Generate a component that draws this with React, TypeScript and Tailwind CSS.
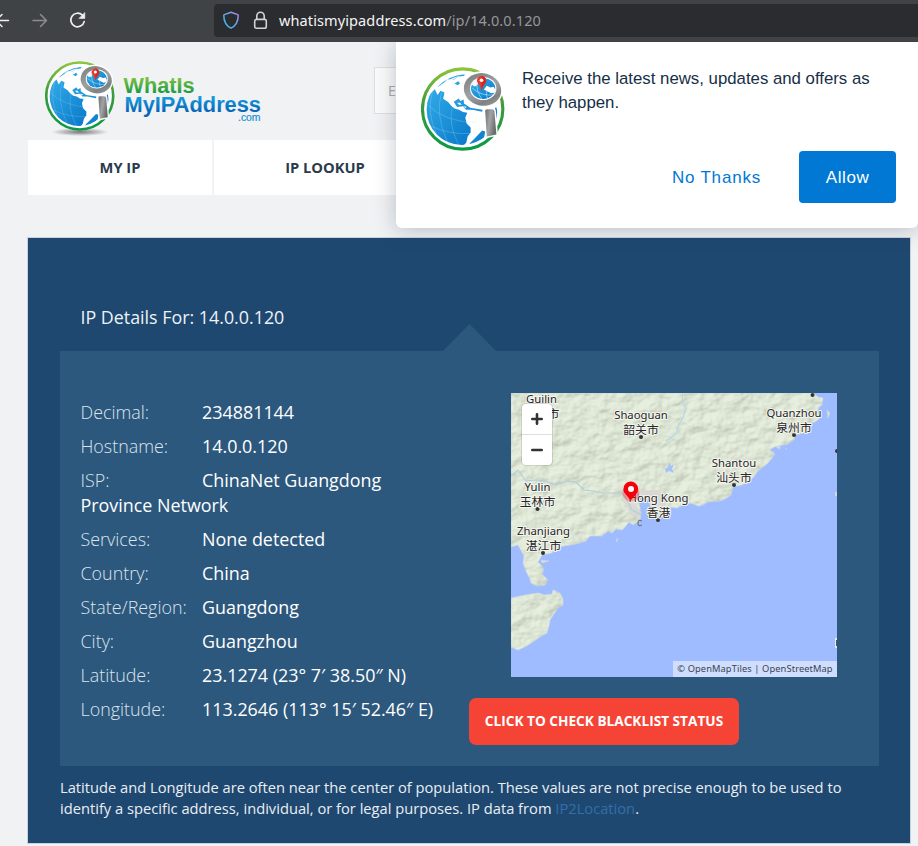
import React from "react";

const details: [string, string][] = [
  ["Decimal:", "234881144"],
  ["Hostname:", "14.0.0.120"],
  ["ISP:", "ChinaNet Guangdong Province Network"],
  ["Services:", "None detected"],
  ["Country:", "China"],
  ["State/Region:", "Guangdong"],
  ["City:", "Guangzhou"],
  ["Latitude:", "23.1274 (23° 7′ 38.50″ N)"],
  ["Longitude:", "113.2646 (113° 15′ 52.46″ E)"],
];

function Globe({ id, className }: { id: string; className: string }) {
  const ring = `${id}-ring`;
  const sea = `${id}-sea`;
  const metal = `${id}-metal`;
  const handle = `${id}-handle`;
  const clip = `${id}-clip`;
  const lens = `${id}-lens`;
  return (
    <svg viewBox="63 78 254 254" className={className}>
      <defs>
        <linearGradient id={ring} x1="0" y1="0" x2="0" y2="1">
          <stop offset="0" stopColor="#8cc43c" />
          <stop offset="0.45" stopColor="#3f9a3c" />
          <stop offset="1" stopColor="#0b9a48" />
        </linearGradient>
        <linearGradient id={sea} x1="0" y1="0" x2="1" y2="1">
          <stop offset="0" stopColor="#35b0ea" />
          <stop offset="1" stopColor="#0877c9" />
        </linearGradient>
        <linearGradient id={metal} x1="0" y1="0" x2="1" y2="1">
          <stop offset="0" stopColor="#77787a" />
          <stop offset="0.5" stopColor="#a0a1a3" />
          <stop offset="0.75" stopColor="#808183" />
          <stop offset="1" stopColor="#a6a7a9" />
        </linearGradient>
        <linearGradient id={handle} x1="0" y1="0" x2="1" y2="0.4">
          <stop offset="0" stopColor="#6d6e70" />
          <stop offset="0.5" stopColor="#a3a4a6" />
          <stop offset="1" stopColor="#6a6b6d" />
        </linearGradient>
        <clipPath id={clip}><circle cx="187" cy="207" r="107" /></clipPath>
        <clipPath id={lens}><ellipse cx="251" cy="143" rx="37" ry="32" /></clipPath>
      </defs>
      <circle cx="189" cy="205" r="121.5" fill="#fff" stroke={`url(#${ring})`} strokeWidth="9.5" />
      <g clipPath={`url(#${clip})`}>
        <path fill={`url(#${sea})`} d="M105 145 L113 163 L122 150 L134 155 L130 174 L145 184 L155 196 L166 204 L178 207 L190 214 L203 216 L197 231 L201 249 L213 261 L213 276 L204 288 L200 306 L190 318 L120 318 L60 240 L78 170Z" />
        <path fill={`url(#${sea})`} d="M113 138 Q145 104 197 99 L193 105 L176 107 L160 117 L144 115 L132 126 L116 137Z M164 128 L176 121 L181 127 L174 133Z M162 183 L177 173 L182 181 L192 176 L193 188 L212 201 L249 207 L248 213 L218 207 L199 207 L190 197 L172 199Z M212 307 L228 291 L248 270 L257 273 L254 291 L235 307 L205 318Z M281 215 L290 198 L297 222 L286 245Z" />
        <path fill="#fff" d="M172 186 L181 186 L186 192 L178 192Z M190 197 L200 198 L199 203Z M140 121 L160 111 L180 104 L165 113 L148 123Z" />
        <g fill="none" stroke="#b9e5fa" strokeWidth="1.3" opacity=".6">
          <path d="M80 190 Q133 245 232 246 M96 258 Q150 283 214 279 M125 155 Q105 222 143 305 M158 197 Q144 250 176 312 M98 151 Q78 215 111 284" />
        </g>
      </g>
      <g stroke="#fff" strokeWidth="9" fill="#fff">
        <ellipse cx="249" cy="146" rx="57" ry="50" transform="rotate(14 249 146)" />
        <path d="M257 211 Q257 206 263 206 L278 206 Q284 206 285 212 L291 282 L262 288Z" />
      </g>
      <ellipse cx="249" cy="146" rx="57" ry="49" transform="rotate(14 249 146)" fill={`url(#${metal})`} />
      <ellipse cx="251" cy="143" rx="40" ry="35" fill="#f7fbfd" />
      <g clipPath={`url(#${lens})`}>
        <ellipse cx="251" cy="143" rx="37" ry="32" fill={`url(#${sea})`} />
        <path d="M226 107 H263 L256 126 L239 119 L233 133 L224 137 L212 127Z M253 146 L262 135 L273 140 L283 138 L292 155 L275 157 L263 151Z" fill="#fff" />
        <path d="M218 142 Q247 168 286 162 M232 121 Q229 151 248 176 M262 148 Q258 167 266 176" stroke="#b9e5fa" strokeWidth="2" fill="none" />
      </g>
      <path d="M246 149 Q242 134 235 127 A14 14 0 1 1 258 127 Q250 134 246 149Z" fill="#e63a2f" />
      <path d="M246 106 A14 14 0 0 1 258 127 Q250 134 246 149Z" fill="#c51e1c" opacity=".6" />
      <circle cx="246" cy="118" r="5.5" fill="#fff" />
      <path d="M257 211 Q257 206 263 206 L278 206 Q284 206 285 212 L291 282 L262 288Z" fill={`url(#${handle})`} />
    </svg>
  );
}

function Toolbar() {
  return (
    <header className="flex h-[41.5px] items-center bg-[#404345]">
      <svg viewBox="0 0 90 41" className="h-[41px] w-[90px] shrink-0" fill="none" strokeWidth="1.5" strokeLinecap="round" strokeLinejoin="round">
        <path d="M-5 20.5 H8.5 M2 14.5 L-4 20.5 L2 26.5" stroke="#f0f0f0" />
        <path d="M33 20.5 H46 M40.5 14.5 L46.5 20.5 L40.5 26.5" stroke="#8b8d8e" />
        <path d="M82.4 15.2 A6.8 6.8 0 1 0 84.2 21.6" stroke="#f0f0f0" strokeWidth="1.7" />
        <path d="M84.8 12.8 V18.4 H79.2Z" fill="#f0f0f0" stroke="#f0f0f0" strokeWidth=".6" />
      </svg>
      <div className="ml-[124px] flex h-[33px] flex-1 items-center rounded-l bg-[#2b2c30]">
        <svg viewBox="0 0 65 33" className="h-[33px] w-[65px] shrink-0" fill="none">
          <defs>
            <linearGradient id="shield" x1="0" y1="1" x2="1" y2="0">
              <stop stopColor="#32bee8" /><stop offset=".55" stopColor="#67a7e8" /><stop offset="1" stopColor="#a78be8" />
            </linearGradient>
          </defs>
          <path d="M17 8.2 L23.7 10.6 Q24.2 10.8 24.2 11.5 C24.2 17.8 21.4 22 17 24.2 C12.6 22 9.8 17.8 9.8 11.5 Q9.8 10.8 10.3 10.6Z" stroke="url(#shield)" strokeWidth="1.5" strokeLinejoin="round" />
          <rect x="40.7" y="15.4" width="11.6" height="8.8" rx="1.8" stroke="#d3d3d4" strokeWidth="1.6" />
          <path d="M42.8 15 V12 A3.7 3.7 0 0 1 50.2 12 V15" stroke="#d3d3d4" strokeWidth="1.6" />
        </svg>
        <span className="whitespace-nowrap pb-[2px] font-['Noto_Sans'] text-[14.5px] leading-5 tracking-[0.11px] text-[#f5f5f5]">
          whatismyipaddress.com<span className="text-[#96979a]">/ip/14.0.0.120</span>
        </span>
      </div>
    </header>
  );
}

function Brand() {
  return (
    <div className="flex pl-[45px]">
      <div className="relative h-[75px] w-[70px]">
        <div className="absolute bottom-0 left-[6px] h-2 w-[58px] rounded-full bg-[radial-gradient(ellipse,#777,transparent_70%)]" />
        <Globe id="brand" className="relative h-[70px] w-[70px]" />
      </div>
      <svg viewBox="0 0 150 76" className="h-[76px] w-[150px]" fontFamily="Liberation Sans, Arial, sans-serif">
        <defs>
          <linearGradient id="word-green" x1="0" y1="0" x2="0" y2="1"><stop offset=".15" stopColor="#86c440" /><stop offset=".85" stopColor="#139748" /></linearGradient>
          <linearGradient id="word-blue" x1="0" y1="0" x2="0" y2="1"><stop offset=".1" stopColor="#18a5e2" /><stop offset=".8" stopColor="#0765b9" /></linearGradient>
        </defs>
        <text x="8.5" y="32" fontSize="22.5" fontWeight="700" textLength="71" lengthAdjust="spacingAndGlyphs" fill="url(#word-green)">WhatIs</text>
        <text x="9.5" y="51" fontSize="22.5" fontWeight="700" textLength="136.5" lengthAdjust="spacingAndGlyphs" fill="url(#word-blue)">MyIPAddress</text>
        <text x="123" y="59.5" fontSize="11" textLength="22.5" lengthAdjust="spacingAndGlyphs" fill="#1591d3" stroke="#1591d3" strokeWidth=".2">.com</text>
      </svg>
    </div>
  );
}

function City({ x, y, en, zh, dot }: { x: number; y: number; en: string; zh: string; dot?: [number, number] }) {
  return (
    <g>
      {dot && <circle cx={dot[0]} cy={dot[1]} r="2" fill="#333" />}
      <g textAnchor="middle" fill="#252525" stroke="#f4f5ef" strokeWidth="2" strokeLinejoin="round" paintOrder="stroke">
        <text x={x} y={y} fontSize="11.3">{en}</text>
        <text x={x} y={y + 15} fontSize="11.8" fontFamily="Noto Sans CJK SC, sans-serif">{zh}</text>
      </g>
    </g>
  );
}

const mainland =
  "M0 0 H302 L307 4 L312 5 L311 12 L308 14 L306 19 L309 25 L304 29 L299 30 L296 39 L284 42 L283 47 L277 51 L272 52 L263 54 L259 57 L264 61 L261 65 L257 70 L251 75 L246 79 L243 84 L239 87 L231 92 L222 94 L220 102 L214 106 L209 108 L197 109 L192 112 L187 113 L180 110 L174 111 L166 115 L159 114 L157 125 L151 122 L146 127 L141 119 L138 108 L131 105 L125 98 L127 107 L130 119 L129 127 L122 132 L118 129 L114 134 L111 137 L105 136 L101 140 L97 138 L91 143 L79 143 L75 148 L65 151 L47 154 L41 160 L31 162 L27 169 L31 173 L33 176 L31 181 L37 187 L34 192 L26 193 L20 190 L19 186 L15 178 L12 170 L13 163 L7 152 L0 154Z";
const island =
  "M0 205 L14 202 L27 200 L34 202 L41 201 L42 197 L49 200 L52 206 L52 212 L47 215 L43 221 L39 227 L38 233 L36 240 L29 244 L22 249 L14 254 L7 257 L0 254Z";

function MapView() {
  return (
    <div className="relative h-[284px] w-[326px] overflow-hidden">
      <svg viewBox="0 0 326 284" className="h-full w-full" fontFamily="Noto Sans, sans-serif">
        <defs>
          <filter id="relief" x="0" y="0" width="100%" height="100%" colorInterpolationFilters="sRGB">
            <feTurbulence type="fractalNoise" baseFrequency="0.06 0.08" numOctaves="3" seed="7" result="n" />
            <feDiffuseLighting in="n" surfaceScale="2.6" diffuseConstant="1.16" lightingColor="#dfe5d6">
              <feDistantLight azimuth="225" elevation="60" />
            </feDiffuseLighting>
          </filter>
          <clipPath id="land"><path d={mainland} /><path d={island} /></clipPath>
        </defs>
        <rect width="326" height="284" fill="#9ebcff" />
        <g fill="#dde5d3" stroke="#c3d0e6" strokeWidth=".8">
          <path d={mainland} /><path d={island} />
          <path d="M316 17 L319 20 L317 25Z M265 54 L269 53 L269 56Z M274 55 L276 56Z M30 167 L38 168 L31 170Z M105 147 L107 145 L106 149Z" />
        </g>
        <g clipPath="url(#land)">
          <rect width="326" height="284" filter="url(#relief)" opacity=".34" />
          <path d="M112 99 L121 107 L130 119 L129 127 L119 120 L112 108Z M127 98 L146 97 L157 105 L153 119 L145 124 L137 106Z" fill="#d8d6d4" opacity=".85" />
          <path d="M0 83 L7 77 L15 88 L25 87 L35 88 L45 92 L57 88 L65 89 L73 97 L83 98 L92 100 L108 100 L114 103 L121 117 L131 122" fill="none" stroke="#aecfe0" strokeWidth="1.1" />
          <path d="M171 1 L172 11 L175 15 L172 25 L168 31 L165 41 L155 48" fill="none" stroke="#b2d4ea" strokeWidth="1.1" />
        </g>
        <path d="M154 76 L157 74 L158 69 L160 73 L163 71 L161 76 L163 80 L158 78 L155 80Z" fill="#a5c3f4" />
        <City x={30.5} y={10} en="Guilin" zh="桂林市" />
        <City x={130} y={26} en="Shaoguan" zh="韶关市" dot={[130, 44]} />
        <City x={283} y={24} en="Quanzhou" zh="泉州市" dot={[283, 42]} />
        <City x={223} y={74} en="Shantou" zh="汕头市" dot={[223, 92]} />
        <City x={26.5} y={98} en="Yulin" zh="玉林市" dot={[26.5, 116]} />
        <City x={147.5} y={109} en="Hong Kong" zh="香港" dot={[147, 127]} />
        <City x={32.5} y={142} en="Zhanjiang" zh="湛江市" dot={[32, 160]} />
        <circle cx="301.5" cy="2" r="2" fill="#333" />
        <circle cx="326" cy="58" r="2" fill="#333" />
        <path d="M325 99 V103" stroke="#dde5d3" strokeWidth="1.5" />
        <path d="M326 245 V255" stroke="#e9e9e9" strokeWidth="4" />
        <path d="M325.5 247 V253" stroke="#555" strokeWidth="1" />
        <path d="M131 128 Q127 126 127 130 Q127 134 131 132" fill="none" stroke="#777" strokeWidth="1.2" />
        <circle cx="120" cy="100" r="8.5" fill="#f33" opacity=".38" />
        <path d="M119.5 107.5 Q118 105 114.8 101.5 A7.4 7.4 0 1 1 125.2 101 Q122 105 119.5 107.5Z" fill="#f5000b" />
        <circle cx="120" cy="96" r="3" fill="#fff" />
      </svg>
      <div className="absolute left-[11px] top-[11px] flex h-[61px] w-[30px] flex-col rounded-[4px] bg-white shadow-[0_0_0_1px_rgba(0,0,0,0.1)]">
        <button className="flex flex-1 items-center justify-center border-b border-[#ddd]">
          <svg viewBox="0 0 12 12" className="h-3 w-3" stroke="#333" strokeWidth="2.6" strokeLinecap="round"><path d="M1.3 6 H10.7 M6 1.3 V10.7" /></svg>
        </button>
        <button className="flex flex-1 items-center justify-center">
          <svg viewBox="0 0 12 12" className="h-3 w-3" stroke="#333" strokeWidth="2.6" strokeLinecap="round"><path d="M1.3 6 H10.7" /></svg>
        </button>
      </div>
      <div className="absolute bottom-0 right-0 flex h-4 w-[164px] items-center justify-center whitespace-nowrap bg-white/50 font-['Noto_Sans'] text-[9.3px] tracking-[0.1px] text-[#3c4350]">
        © OpenMapTiles | OpenStreetMap
      </div>
    </div>
  );
}

function Notice() {
  return (
    <aside className="absolute left-[396px] top-[41.5px] h-[186.5px] w-[522px] rounded-b-[6px] bg-white font-['Liberation_Sans'] shadow-[0_2px_22px_rgba(30,50,70,0.28)] [clip-path:inset(0_-40px_-40px_-40px)]">
      <div className="flex pl-[25px] pt-[25px]">
        <Globe id="notice" className="h-[84px] w-[84px] shrink-0" />
        <p className="ml-[17px] w-[370px] text-[16.8px] leading-[24.5px] text-[#162f46]">
          Receive the latest news, updates and offers as they happen.
        </p>
      </div>
      <div className="flex items-center justify-end pr-[22px] text-[17px]">
        <button className="mr-[38px] pt-[2px] tracking-[0.8px] text-[#0078d4]">No Thanks</button>
        <button className="h-[52px] w-[97px] rounded-[4px] bg-[#0078d4] pt-[2px] tracking-[0.6px] text-white">Allow</button>
      </div>
    </aside>
  );
}

export default function App() {
  return (
    <div className="relative h-[846px] w-[918px] overflow-hidden bg-[#f1f2f4] font-['Open_Sans']">
      <Toolbar />
      <div className="flex h-[98.5px] pt-[19.5px]">
        <Brand />
        <div className="ml-[109px] mt-[6px] h-[47px] w-[110px] border border-[#dedfe1] bg-[#fafafa] pl-[13px] text-[14px] leading-[45px] text-[#aaa]">Enter</div>
      </div>
      <nav className="flex h-[54.5px] gap-[2px] pl-7 text-[14.7px] font-bold text-[#2b3b4e]">
        <a className="flex w-[184px] items-center justify-center bg-white">MY IP</a>
        <a className="flex w-[222px] items-center justify-center bg-white">IP LOOKUP</a>
      </nav>
      <main className="ml-[27px] mt-[42.5px] h-[607px] w-[884px] border border-[#c7d2dd] bg-[#1f4871] pl-8 text-white">
        <h1 className="h-[113px] pl-[20.5px] pt-[65px] text-[17.85px] leading-7 text-[#edf2f6]">IP Details For: 14.0.0.120</h1>
        <section className="relative flex h-[415px] w-[819px] bg-[#2d587e]">
          <div className="absolute -top-[27px] left-[382px] h-7 w-[55px] bg-[#2d587e] [clip-path:polygon(50%_0,100%_100%,0_100%)]" />
          <div className="w-[409px] pl-[20.5px] pt-[49px] text-[17.9px]">
            {details.map(([label, value]) => (
              <p key={label} className="mb-[8.2px] w-[355px] leading-[25.7px]">
                <span className="inline-block w-[121.5px] font-light text-[#dce5ed]">{label}</span>
                {value}
              </p>
            ))}
          </div>
          <div className="flex flex-col">
            <div className="ml-[42px] mt-[42px]"><MapView /></div>
            <button className="mt-[21px] h-[47px] w-[270px] rounded-[7px] bg-[#f54336] text-[13.65px] font-bold">CLICK TO CHECK BLACKLIST STATUS</button>
          </div>
        </section>
        <p className="mt-[11px] w-[810px] text-[14.7px] leading-[21px] text-[#e9eef3]">
          Latitude and Longitude are often near the center of population. These values are not precise enough to be used to identify a specific address, individual, or for legal purposes. IP data from <a className="text-[#316fa8]">IP2Location</a>.
        </p>
      </main>
      <Notice />
    </div>
  );
}
